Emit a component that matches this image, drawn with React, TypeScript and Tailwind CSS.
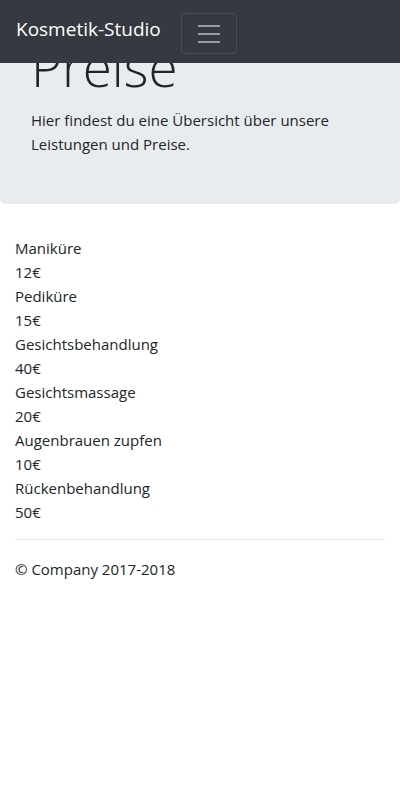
const services = [
  { name: "Maniküre", price: "12€" },
  { name: "Pediküre", price: "15€" },
  { name: "Gesichtsbehandlung", price: "40€" },
  { name: "Gesichtsmassage", price: "20€" },
  { name: "Augenbrauen zupfen", price: "10€" },
  { name: "Rückenbehandlung", price: "50€" },
];

export default function App() {
  return (
    <div className="min-h-[800px] bg-white font-['Open_Sans',sans-serif] text-[15px] leading-6 text-[#212529]">
      {/* Navbar */}
      <nav className="fixed left-0 right-0 top-0 z-10 flex h-[63px] items-start bg-[#343a40] px-4">
        <a href="#" className="pt-[15px] text-[19px] leading-[28px] text-white">
          Kosmetik-Studio
        </a>
        <button
          className="ml-[20px] mt-[13px] flex h-[41px] w-[56px] items-center justify-center rounded-[4px] border border-white/10"
          aria-label="Toggle navigation"
        >
          <svg width="30" height="30" viewBox="0 0 30 30">
            <path
              stroke="rgba(255,255,255,0.5)"
              strokeWidth="2"
              strokeLinecap="butt"
              d="M4 7h22M4 15h22M4 23h22"
            />
          </svg>
        </button>
      </nav>

      {/* Jumbotron */}
      <div className="mb-8 rounded-[5px] bg-[#e9ecef] px-4 pb-8 pt-[33px]">
        <div className="px-[15px]">
          <h1 className="mb-2 text-[53px] font-light leading-[67px]">Preise</h1>
          <p className="mb-4">
            Hier findest du eine Übersicht über unsere Leistungen und Preise.
          </p>
        </div>
      </div>

      {/* Price list */}
      <div className="px-[15px]">
        {services.map((s) => (
          <div key={s.name}>
            <p>{s.name}</p>
            <p>{s.price}</p>
          </div>
        ))}
        <hr className="mt-[15px] border-t border-[#e5e5e5]" />
        <footer className="pt-[17px]">
          <p>© Company 2017-2018</p>
        </footer>
      </div>
    </div>
  );
}
